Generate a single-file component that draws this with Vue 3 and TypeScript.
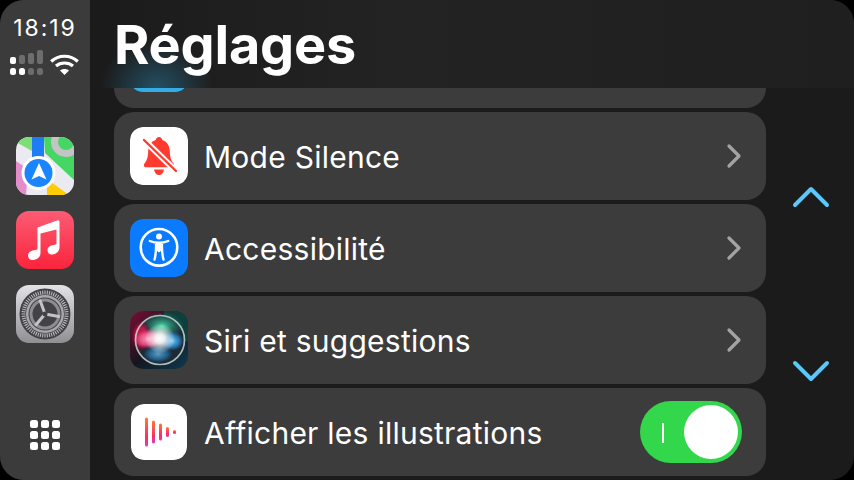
<script setup lang="ts">
interface Row { label: string; icon: string; toggle?: boolean }
const rows: Row[] = [
  { label: 'Mode Silence', icon: 'silence' },
  { label: 'Accessibilité', icon: 'access' },
  { label: 'Siri et suggestions', icon: 'siri' },
  { label: 'Afficher les illustrations', icon: 'wave', toggle: true },
]
const bars = [
  { x: 0, h: 14.5 }, { x: 7, h: 11.5 }, { x: 14, h: 8.5 }, { x: 21, h: 5 }, { x: 28, h: 2 },
]
const ticks = Array.from({ length: 60 }, (_, i) => i * 6)
</script>

<template>
  <div class="screen">
    <aside class="rail">
      <div class="status">
        <div class="time">18:19</div>
        <div class="signal">
          <svg width="33" height="25" viewBox="0 0 33 25">
            <g fill="#6d6d6d">
              <rect x="9" y="5" width="6" height="9" rx="2" />
              <rect x="18" y="3" width="6" height="11" rx="2" />
              <rect x="27" y="0" width="6" height="14" rx="2" />
              <rect x="18" y="18" width="6" height="7" rx="2.500" />
              <rect x="27" y="18" width="6" height="7" rx="2.500" />
            </g>
            <g fill="#fff">
              <rect x="0" y="7" width="6" height="7" rx="2" />
              <rect x="0" y="18" width="6" height="7" rx="2.500" />
              <rect x="9" y="18" width="6" height="7" rx="2.500" />
            </g>
          </svg>
          <svg width="29" height="21" viewBox="0 0 29 21" fill="none" stroke="#fff" stroke-width="3.200">
            <path d="M1.200 7.500 C8.500 0.500 20.500 0.500 27.800 7.500" />
            <path d="M6 12 C10.500 8 18.500 8 23 12" />
            <path d="M14.500 21 L10 16.500 C12.500 14.500 16.500 14.500 19 16.500 Z" fill="#fff" stroke="none" />
          </svg>
        </div>
      </div>

      <div class="apps">
        <svg class="app" viewBox="0 0 58 58">
          <defs>
            <clipPath id="mapsClip"><rect width="58" height="58" rx="13" /></clipPath>
          </defs>
          <g clip-path="url(#mapsClip)">
            <rect width="58" height="58" fill="#eaeaf0" />
            <path d="M28 0 H58 V43 L29 16 Z" fill="#45d663" />
            <path d="M0 0 H16 V14 L0 5 Z" fill="#7fdd78" />
            <path d="M0 24 L12 32 L10 58 H0 Z" fill="#e58ccb" />
            <path d="M31 58 V48 L35 45 L53 58 Z" fill="#ffcb05" />
            <circle cx="50" cy="5" r="11.500" fill="none" stroke="#c4c4c6" stroke-width="7" />
            <rect x="16" y="0" width="12" height="30" fill="#1f7bf6" />
            <circle cx="22.500" cy="36" r="17" fill="#fff" />
            <circle cx="22.500" cy="36" r="14" fill="#1a85ff" />
            <path d="M23 26 L30.500 42.500 L23 39 L15.500 42.500 Z" fill="#fff" />
          </g>
        </svg>

        <svg class="app" viewBox="0 0 58 58">
          <defs>
            <linearGradient id="musicBg" x1="0" y1="0" x2="0" y2="1">
              <stop offset="0" stop-color="#fc5c74" />
              <stop offset="1" stop-color="#fa243c" />
            </linearGradient>
          </defs>
          <rect width="58" height="58" rx="13" fill="url(#musicBg)" />
          <path d="M21.500 16.500 L41 9.500 C42.500 9 43.500 9.800 43.500 11 V36 C43.500 40.500 40.500 43 36.500 43.500 C33.500 44 31.500 42 31.500 39 C31.500 36.500 33.500 34.800 36 34.200 L39.500 33.400 C40.300 33.200 40.500 32.700 40.500 32 V18.500 L24.500 22.500 V42 C24.500 46 21.500 48.500 17.500 49 C14 49.500 12 47.500 12 44.500 C12 42 14 40 16.500 39.500 L20.500 38.700 C21.200 38.500 21.500 38 21.500 37 Z" fill="#fff" />
        </svg>

        <svg class="app" viewBox="0 0 58 58">
          <defs>
            <linearGradient id="gearBg" x1="0" y1="0" x2="0" y2="1">
              <stop offset="0" stop-color="#e3e3e7" />
              <stop offset="1" stop-color="#8f8f94" />
            </linearGradient>
          </defs>
          <rect width="58" height="58" rx="13" fill="url(#gearBg)" />
          <circle cx="29" cy="29" r="25.500" fill="#434347" />
          <g stroke="#c2c2c6" stroke-width="1">
            <line v-for="t in ticks" :key="t" x1="29" y1="5.500" x2="29" y2="9.500" :transform="`rotate(${t} 29 29)`" />
          </g>
          <circle cx="29" cy="29" r="19" fill="#a9a9ad" />
          <circle cx="29" cy="29" r="16.500" fill="#434347" />
          <circle cx="29" cy="29" r="14" fill="none" stroke="#8d8d91" stroke-width="3" />
          <g stroke="#c4c4c8" stroke-width="3" stroke-linecap="round">
            <line x1="29" y1="29" x2="42.800" y2="31.400" />
            <line x1="29" y1="29" x2="20" y2="39.700" />
            <line x1="29" y1="29" x2="24.200" y2="15.800" />
          </g>
          <circle cx="29" cy="29" r="2.500" fill="#434347" />
        </svg>
      </div>

      <div class="grid-btn">
        <span v-for="n in 9" :key="n" class="dot"></span>
      </div>
    </aside>

    <main class="content">
      <header class="head">
        <h1>Réglages</h1>
      </header>
      <div class="list">
        <div class="row partial"><span class="tile blue-tile"></span></div>
        <div v-for="r in rows" :key="r.label" class="row">
          <svg v-if="r.icon === 'silence'" class="tile" viewBox="0 0 58 58">
            <rect width="58" height="58" rx="13" fill="#fff" />
            <path d="M29 10 C31 10 32 11.500 32.300 13 C37 14.500 39.500 18.500 39.800 24 C40 30 41 33.500 43.500 36.500 C44.500 38 44.200 40.300 42 40.300 H16 C13.800 40.300 13.500 38 14.500 36.500 C17 33.500 18 30 18.200 24 C18.500 18.500 21 14.500 25.700 13 C26 11.500 27 10 29 10 Z" fill="#ff3b30" />
            <path d="M24 42.500 H34 C33.500 46 31.500 48 29 48 C26.500 48 24.500 46 24 42.500 Z" fill="#ff3b30" />
            <line x1="9" y1="8" x2="49" y2="47" stroke="#fff" stroke-width="6" />
            <line x1="14" y1="13" x2="46" y2="44" stroke="#ff3b30" stroke-width="2.400" stroke-linecap="round" />
          </svg>
          <svg v-else-if="r.icon === 'access'" class="tile" viewBox="0 0 58 58">
            <rect width="58" height="58" rx="13" fill="#0a7aff" />
            <circle cx="29" cy="28.300" r="18.300" fill="none" stroke="#fff" stroke-width="2.600" />
            <circle cx="29" cy="17.500" r="3" fill="#fff" />
            <path d="M19.800 22 C23 23.300 26 23.800 29 23.800 C32 23.800 35 23.300 38.200 22 M26 24 C26.300 31 26.300 34 24.500 40.500 M32 24 C31.700 31 31.700 34 33.500 40.500" fill="none" stroke="#fff" stroke-width="2.400" stroke-linecap="round" />
            <path d="M26 23.500 H32 V31 L29 33.500 L26 31 Z" fill="#fff" />
          </svg>
          <svg v-else-if="r.icon === 'siri'" class="tile" viewBox="0 0 58 58">
            <defs>
              <clipPath id="siriClip"><rect width="58" height="58" rx="13" /></clipPath>
              <radialGradient id="siriGlow">
                <stop offset="0" stop-color="#fff" />
                <stop offset="0.3" stop-color="#fff" stop-opacity="0.9" />
                <stop offset="1" stop-color="#fff" stop-opacity="0" />
              </radialGradient>
              <radialGradient id="siriPink">
                <stop offset="0" stop-color="#ff9fc2" />
                <stop offset="0.6" stop-color="#e8588a" stop-opacity="0.85" />
                <stop offset="1" stop-color="#d93a6e" stop-opacity="0" />
              </radialGradient>
              <radialGradient id="siriBlue">
                <stop offset="0" stop-color="#7ad0f5" />
                <stop offset="0.6" stop-color="#2a8ad0" stop-opacity="0.8" />
                <stop offset="1" stop-color="#1c6fb8" stop-opacity="0" />
              </radialGradient>
              <radialGradient id="siriGreen">
                <stop offset="0" stop-color="#45dba8" />
                <stop offset="1" stop-color="#1a8a70" stop-opacity="0" />
              </radialGradient>
              <radialGradient id="siriRed">
                <stop offset="0.5" stop-color="#c0164a" />
                <stop offset="1" stop-color="#4c0c28" stop-opacity="0" />
              </radialGradient>
              <linearGradient id="siriBg" x1="0" y1="0" x2="1" y2="1">
                <stop offset="0" stop-color="#7a0c36" />
                <stop offset="0.5" stop-color="#14161e" />
                <stop offset="1" stop-color="#0e3a50" />
              </linearGradient>
            </defs>
            <g clip-path="url(#siriClip)">
              <rect width="58" height="58" fill="url(#siriBg)" />
              <rect x="34" width="24" height="30" fill="#0b4a44" opacity="0.8" />
              <circle cx="30" cy="29" r="24.500" fill="#1c2a34" />
              <ellipse cx="32" cy="15" rx="22" ry="14" fill="url(#siriGreen)" />
              <ellipse cx="11" cy="25" rx="11" ry="17" fill="url(#siriRed)" />
              <ellipse cx="18" cy="28" rx="14" ry="10" fill="url(#siriPink)" />
              <ellipse cx="42" cy="30" rx="12" ry="10" fill="url(#siriBlue)" />
              <ellipse cx="28" cy="43" rx="15" ry="9" fill="url(#siriBlue)" opacity="0.7" />
              <circle cx="30" cy="27.500" r="15" fill="url(#siriGlow)" />
              <circle cx="30" cy="29" r="24.500" fill="none" stroke="#d3e0dc" stroke-opacity="0.8" stroke-width="1.700" />
            </g>
          </svg>
          <svg v-else class="tile small-tile" viewBox="0 0 56 56">
            <defs>
              <linearGradient id="waveGrad" x1="0" y1="0" x2="0" y2="1">
                <stop offset="0" stop-color="#ff7a2f" />
                <stop offset="0.7" stop-color="#fb2a6d" />
                <stop offset="1" stop-color="#d840b8" />
              </linearGradient>
            </defs>
            <rect width="56" height="56" rx="13" fill="#fff" />
            <g transform="translate(14 14)">
              <rect v-for="b in bars" :key="b.x" :x="b.x" :y="14 - b.h" width="3" :height="b.h * 2" rx="1.500" fill="url(#waveGrad)" />
            </g>
          </svg>
          <span class="label">{{ r.label }}</span>
          <span v-if="r.toggle" class="toggle"><i class="on-mark"></i><i class="knob"></i></span>
          <svg v-else class="chevron" width="16" height="26" viewBox="0 0 16 26" fill="none">
            <path d="M3 3 L13 13 L3 23" stroke="#a3a3a3" stroke-width="3.200" stroke-linecap="round" stroke-linejoin="round" />
          </svg>
        </div>
      </div>
    </main>

    <nav class="arrows">
      <svg width="40" height="24" viewBox="0 0 40 24" fill="none"><path d="M4 20 L20 4 L36 20" stroke="#5ac8fa" stroke-width="4" stroke-linecap="round" stroke-linejoin="round" /></svg>
      <svg width="40" height="24" viewBox="0 0 40 24" fill="none"><path d="M4 4 L20 20 L36 4" stroke="#5ac8fa" stroke-width="4" stroke-linecap="round" stroke-linejoin="round" /></svg>
    </nav>
  </div>
</template>

<style>
html, body { margin: 0; background: #000; }
</style>

<style scoped>
.screen {
  width: 854px;
  height: 480px;
  display: flex;
  overflow: hidden;
  border-radius: 24px;
  background: #1b1b1b;
  font-family: Inter, "Liberation Sans", sans-serif;
  color: #fff;
}
.rail {
  width: 90px;
  flex: none;
  background: #3b3b3b;
  display: flex;
  flex-direction: column;
  align-items: center;
}
.status { padding-top: 15px; display: flex; flex-direction: column; align-items: center; }
.time { font-size: 23px; line-height: 27px; letter-spacing: 1.900px; }
.signal { display: flex; align-items: flex-end; gap: 7px; margin-top: 8px; margin-left: -1px; }
.apps { margin-top: 62px; display: flex; flex-direction: column; gap: 16px; }
.app { width: 58px; height: 58px; display: block; }
.grid-btn {
  margin-top: 77px;
  display: grid;
  grid-template-columns: repeat(3, 8px);
  grid-auto-rows: 8px;
  gap: 3px;
}
.dot { background: #fff; border-radius: 2.500px; }
.content {
  width: 652px;
  margin-left: 24px;
  flex: none;
  display: flex;
  flex-direction: column;
}
.head { height: 88px; flex: none; position: relative; }
.head::before {
  content: "";
  position: absolute;
  left: -24px;
  right: -88px;
  top: 0;
  bottom: 0;
  background:
    radial-gradient(ellipse 56px 48px at 67px 88px, rgba(45, 155, 205, 0.4), rgba(45, 155, 205, 0.18) 55%, transparent),
    linear-gradient(90deg, #1b1b1b, #232323 40%, #1f1f1f);
}
h1 {
  position: relative;
  margin: 0;
  font-size: 54px;
  line-height: 90px;
  font-weight: 700;
  letter-spacing: -0.200px;
}
.list { display: flex; flex-direction: column; gap: 4px; }
.row {
  height: 88px;
  flex: none;
  box-sizing: border-box;
  display: flex;
  align-items: center;
  padding: 0 25px 0 16px;
  background: #3c3c3c;
  border-radius: 20px;
}
.partial {
  height: 20px;
  align-items: flex-end;
  padding-bottom: 16px;
  overflow: hidden;
  border-radius: 0 0 20px 20px;
}
.tile { width: 58px; height: 58px; flex: none; display: block; border-radius: 13px; }
.blue-tile { background: #32ade6; }
.small-tile { width: 56px; height: 56px; margin: 0 1px; }
.label { margin: 2px 0 0 16px; flex: 1; font-size: 30px; line-height: 38px; letter-spacing: 0.250px; white-space: nowrap; }
.chevron { flex: none; margin-right: -1px; }
.toggle {
  width: 102px;
  height: 62px;
  margin-right: -1px;
  flex: none;
  position: relative;
  border-radius: 31px;
  background: #32d74b;
  display: block;
}
.on-mark { position: absolute; left: 22px; top: 22px; width: 2px; height: 20px; background: #fff; }
.knob { position: absolute; left: 44px; top: 4px; width: 54px; height: 54px; border-radius: 50%; background: #fff; }
.arrows {
  flex: 1;
  display: flex;
  flex-direction: column;
  align-items: center;
  gap: 150px;
  padding-top: 185px;
  padding-left: 1px;
}
</style>
